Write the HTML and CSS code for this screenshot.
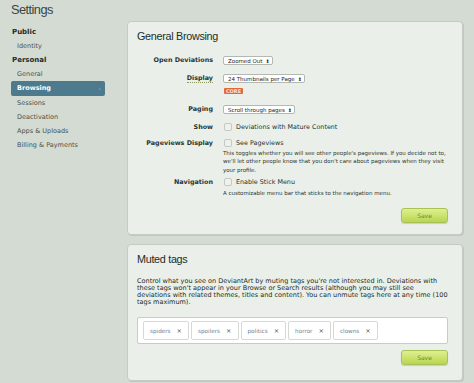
FILE: index.html
```html
<!DOCTYPE html>
<html>
<head>
<meta charset="utf-8">
<link rel="stylesheet" href="styles.css">
</head>
<body>
<div class="page">
  <aside class="sidebar">
    <h1 class="title">Settings</h1>
    <div class="group">Public</div>
    <div class="item">Identity</div>
    <div class="group">Personal</div>
    <div class="item">General</div>
    <div class="item active">Browsing<span class="chev">›</span></div>
    <div class="item">Sessions</div>
    <div class="item">Deactivation</div>
    <div class="item">Apps &amp; Uploads</div>
    <div class="item">Billing &amp; Payments</div>
  </aside>
  <main class="main">
    <section class="panel panel-browse">
      <h2 class="ptitle">General Browsing</h2>
      <div class="form">
        <div class="row r-open">
          <div class="label">Open Deviations</div>
          <div class="ctrl"><span class="select">Zoomed Out<span class="arr">⬍</span></span></div>
        </div>
        <div class="row r-display">
          <div class="label"><span class="dotted">Display</span></div>
          <div class="ctrl">
            <span class="select">24 Thumbnails per Page<span class="arr">⬍</span></span>
            <span class="core">CORE</span>
          </div>
        </div>
        <div class="row r-paging">
          <div class="label">Paging</div>
          <div class="ctrl"><span class="select">Scroll through pages<span class="arr">⬍</span></span></div>
        </div>
        <div class="row r-show">
          <div class="label">Show</div>
          <div class="ctrl"><div class="cline"><span class="check"></span><span class="ctext">Deviations with Mature Content</span></div></div>
        </div>
        <div class="row r-pv">
          <div class="label">Pageviews Display</div>
          <div class="ctrl">
            <div class="cline"><span class="check"></span><span class="ctext">See Pageviews</span></div>
            <p class="desc">This toggles whether you will see other people's pageviews. If you decide not to, we'll let other people know that you don't care about pageviews when they visit your profile.</p>
          </div>
        </div>
        <div class="row r-nav">
          <div class="label">Navigation</div>
          <div class="ctrl">
            <div class="cline"><span class="check"></span><span class="ctext">Enable Stick Menu</span></div>
            <p class="desc d2">A customizable menu bar that sticks to the navigation menu.</p>
          </div>
        </div>
      </div>
      <div class="actions a1"><span class="save">Save</span></div>
    </section>
    <section class="panel panel-tags">
      <h2 class="ptitle">Muted tags</h2>
      <p class="intro">Control what you see on DeviantArt by muting tags you're not interested in. Deviations with these tags won't appear in your Browse or Search results (although you may still see deviations with related themes, titles and content). You can unmute tags here at any time (100 tags maximum).</p>
      <div class="tagbox">
        <span class="tag">spiders<span class="x">×</span></span>
        <span class="tag">spoilers<span class="x">×</span></span>
        <span class="tag">politics<span class="x">×</span></span>
        <span class="tag">horror<span class="x">×</span></span>
        <span class="tag">clowns<span class="x">×</span></span>
      </div>
      <div class="actions a2"><span class="save">Save</span></div>
    </section>
  </main>
</div>
</body>
</html>
```
FILE: styles.css
```css
html, body {
  margin: 0;
  padding: 0;
}
body {
  background: #d3dbd2;
  font-family: "DejaVu Sans", Verdana, sans-serif;
  color: #333;
  width: 474px;
  height: 383px;
  overflow: hidden;
}
.page {
  display: flex;
  height: 383px;
}
.sidebar {
  width: 127px;
  flex: none;
  padding-top: 1px;
}
.title {
  font-family: "Liberation Sans", Arial, sans-serif;
  font-weight: normal;
  font-size: 12.8px;
  letter-spacing: -0.55px;
  color: #3b4641;
  margin: 0 0 6px 11px;
  line-height: 18px;
}
.group {
  font-weight: bold;
  font-size: 7px;
  color: #1f2a26;
  margin-left: 12px;
  line-height: 14px;
}
.item {
  font-size: 6.5px;
  color: #4a534f;
  margin-left: 17px;
  line-height: 14px;
}
.item.active {
  margin-left: 11px;
  padding-left: 6px;
  width: 88px;
  height: 15px;
  line-height: 15px;
  background: #4d7a8d;
  color: #fff;
  font-weight: bold;
  border-radius: 2px;
  display: flex;
  justify-content: space-between;
}
.chev {
  font-weight: normal;
  font-size: 6px;
  color: #a9c3cf;
  padding-right: 4px;
}
.main {
  padding-top: 21px;
  display: flex;
  flex-direction: column;
  gap: 9px;
}
.panel {
  width: 336px;
  box-sizing: border-box;
  background: #eaf0e9;
  border: 1px solid #c3cbc2;
  border-radius: 4px;
  box-shadow: 1px 1px 0 #c0c8bf;
}
.panel-browse {
  height: 214px;
  padding: 7px 14px 0 9px;
}
.panel-tags {
  height: 137px;
  padding: 7px 14px 0 9px;
}
.ptitle {
  font-family: "Liberation Sans", Arial, sans-serif;
  font-weight: normal;
  font-size: 10.8px;
  letter-spacing: -0.3px;
  color: #232c28;
  margin: 0;
  line-height: 14px;
}
.form {
  margin-top: 11px;
}
.row {
  display: grid;
  grid-template-columns: 76px 1fr;
  column-gap: 10px;
  align-items: start;
}
.label {
  text-align: right;
  font-weight: bold;
  font-size: 6.4px;
  color: #2c3430;
  line-height: 12px;
}
.dotted {
  border-bottom: 1px dotted #8a9a60;
}
.ctrl {
  line-height: 12px;
}
.select {
  display: inline-flex;
  align-items: center;
  box-sizing: border-box;
  height: 9px;
  padding: 0 2px 0 4px;
  background: #fff;
  border: 1px solid #b3b8b3;
  border-radius: 2px;
  font-size: 5.5px;
  color: #222;
  line-height: 8px;
  vertical-align: middle;
  gap: 3px;
}
.arr {
  font-size: 5px;
  color: #333;
}
.core {
  display: block;
  width: 19px;
  height: 6px;
  margin-top: 4px;
  margin-left: 1px;
  background: #e3683c;
  color: #fbe1d0;
  font-size: 5px;
  font-weight: bold;
  line-height: 6px;
  text-align: center;
  border-radius: 1px;
}
.r-open { margin-top: 0; }
.r-display { margin-top: 6px; }
.r-paging { margin-top: 9px; }
.r-show { margin-top: 6px; }
.r-pv { margin-top: 4px; }
.r-nav { margin-top: 2px; }
.cline {
  display: flex;
  align-items: center;
  height: 12px;
}
.check {
  width: 6px;
  height: 6px;
  border: 1px solid #c4c9c4;
  border-radius: 2px;
  background: #eef1ee;
  margin-left: 1px;
  margin-right: 4px;
  flex: none;
}
.ctext {
  font-size: 6.4px;
  color: #2a302d;
}
.desc {
  margin: 0;
  font-size: 5.5px;
  line-height: 8.4px;
  color: #2d332f;
  width: 225px;
}
.d2 {
  margin-top: 1px;
}
.actions {
  display: flex;
  justify-content: flex-end;
}
.a1 {
  margin-top: 10px;
}
.save {
  width: 47px;
  height: 15px;
  box-sizing: border-box;
  border: 1px solid #a8c257;
  border-radius: 3px;
  background: linear-gradient(#dff08e, #b9d650);
  color: #6a8a2c;
  font-size: 6px;
  line-height: 13px;
  text-align: center;
  box-shadow: 0 1px 1px rgba(0,0,0,0.15);
}
.intro {
  margin: 12px 0 0 0;
  font-size: 6.5px;
  line-height: 7px;
  color: #242a27;
  width: 312px;
}
.tagbox {
  margin-top: 11px;
  height: 27px;
  box-sizing: border-box;
  border: 1px solid #c7ccc7;
  background: #fff;
  border-radius: 2px;
  display: flex;
  align-items: center;
  gap: 2px;
  padding-left: 5px;
}
.tag {
  height: 19px;
  box-sizing: border-box;
  border: 1px solid #d6dad6;
  border-radius: 2px;
  background: #fff;
  display: inline-flex;
  align-items: center;
  padding: 0 6px 0 6px;
  font-size: 5.7px;
  color: #6f8194;
  gap: 6px;
}
.x {
  color: #47504c;
  font-size: 6.5px;
}
.a2 {
  margin-top: 6px;
}
```
